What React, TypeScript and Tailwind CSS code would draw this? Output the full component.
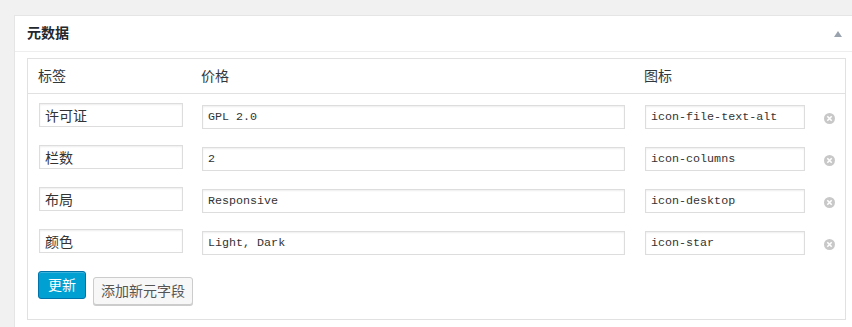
import React from 'react';

const rows = [
  { key: '许可证', value: 'GPL 2.0', icon: 'icon-file-text-alt' },
  { key: '栏数', value: '2', icon: 'icon-columns' },
  { key: '布局', value: 'Responsive', icon: 'icon-desktop' },
  { key: '颜色', value: 'Light, Dark', icon: 'icon-star' },
];

const cjk = "font-['Liberation_Sans','Noto_Sans_CJK_SC',sans-serif]";
const mono = "font-['Liberation_Mono','Noto_Sans_CJK_SC',monospace]";

function RemoveIcon() {
  return (
    <svg width="11" height="11" viewBox="0 0 11 11">
      <circle cx="5.5" cy="5.5" r="5.5" fill="#c8c8c8" />
      <path d="M3.3 3.3 L7.7 7.7 M7.7 3.3 L3.3 7.7" stroke="#fff" strokeWidth="1.6" />
    </svg>
  );
}

function Field({ value, width, font }: { value: string; width: string; font: string }) {
  return (
    <input
      readOnly
      value={value}
      className={`${width} h-[24px] border border-[#dddddd] bg-white px-[5px] text-[#333] outline-none shadow-[inset_0_1px_2px_rgba(0,0,0,0.07)] ${font}`}
    />
  );
}

export default function App() {
  return (
    <div className={`min-h-[327px] h-[327px] overflow-hidden bg-[#f1f1f1] pl-[14px] pt-[15px] ${cjk}`}>
      <div className="w-[850px] h-[320px] border border-[#e5e5e5] bg-white">
        {/* Header */}
        <div className="flex h-[36px] items-center justify-between border-b border-[#eeeeee] pl-[12px] pr-[13px]">
          <span className="text-[14px] font-bold text-[#23282d]">元数据</span>
          <svg width="8" height="6" viewBox="0 0 8 6" className="mr-[8px] mt-[1px]">
            <polygon points="4,0 8,6 0,6" fill="#9aa3ad" />
          </svg>
        </div>

        {/* Body */}
        <div className="px-[12px] pt-[6px]">
          <div className="w-[819px] border border-[#e1e1e1]">
            <div className="grid h-[35px] grid-cols-[163px_443px_181px_1fr] items-center border-b border-[#e1e1e1] text-[14px] text-[#32373c]">
              <span className="pl-[10px]">标签</span>
              <span className="pl-[10px]">价格</span>
              <span className="pl-[10px]">图标</span>
              <span />
            </div>

            <div className="pt-[0px]">
              {rows.map((r) => (
                <div key={r.key} className="grid h-[42px] grid-cols-[163px_443px_181px_1fr] items-center pt-[1px]">
                  <div className="pl-[11px]">
                    <Field value={r.key} width="w-[144px]" font="text-[14px]" />
                  </div>
                  <div className="pl-[11px]">
                    <Field value={r.value} width="w-[423px]" font={`${mono} text-[11.7px]`} />
                  </div>
                  <div className="pl-[11px]">
                    <Field value={r.icon} width="w-[160px]" font={`${mono} text-[11.7px]`} />
                  </div>
                  <div className="flex pl-[9px] pt-[5px]">
                    <RemoveIcon />
                  </div>
                </div>
              ))}
            </div>

            <div className="flex items-start gap-[7px] pl-[10px] pt-[9px] pb-[14px]">
              <button className="h-[28px] w-[48px] rounded-[3px] border border-[#0073aa] bg-[#00a0d2] text-[14px] text-white shadow-[inset_0_1px_0_rgba(120,200,230,0.5)]">
                更新
              </button>
              <button className="mt-[6px] h-[28px] w-[100px] rounded-[3px] border border-[#cccccc] bg-[#f7f7f7] text-[14px] text-[#555] shadow-[0_1px_0_#cccccc]">
                添加新元字段
              </button>
            </div>
          </div>
        </div>
      </div>
    </div>
  );
}
